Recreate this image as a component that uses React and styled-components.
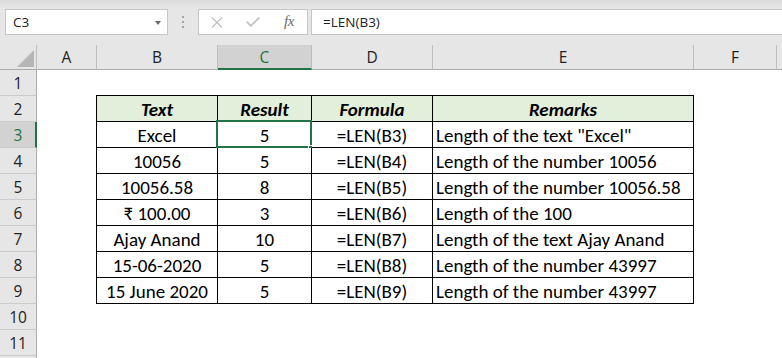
import React from 'react';
import styled, { createGlobalStyle } from 'styled-components';

const GREEN = '#217346';
const UI_FONT = '"Open Sans", "Noto Sans", "DejaVu Sans", sans-serif';
const CELL_FONT = 'Carlito, Lato, "Noto Sans", "DejaVu Sans", sans-serif';

const Global = createGlobalStyle`
  html, body { margin: 0; padding: 0; background: #fff; overflow: hidden; }
  body { width: 782px; height: 358px; }
`;

const Page = styled.div`
  width: 782px;
  height: 358px;
  overflow: hidden;
  display: flex;
  flex-direction: column;
`;

/* ---------- Formula bar ---------- */
const FormulaBar = styled.div`
  height: 35px;
  box-sizing: border-box;
  padding: 9px 0 0 5px;
  display: flex;
  align-items: flex-start;
  background: linear-gradient(#dcdcdc 0px, #e6e6e6 8px, #e6e6e6 100%);
`;

const Box = styled.div`
  box-sizing: border-box;
  height: 26px;
  background: #fff;
  border: 1px solid #c6c6c6;
  display: flex;
  align-items: center;
  font-family: ${UI_FONT};
  font-size: 13.5px;
  color: #222;
`;

const NameBox = styled(Box)`
  width: 163px;
  padding: 0 6px 0 7px;
  justify-content: space-between;
`;

const DropArrow = styled.span`
  width: 0;
  height: 0;
  border-left: 3.5px solid transparent;
  border-right: 3.5px solid transparent;
  border-top: 4px solid #6b6b6b;
  margin-top: 1px;
`;

const Grip = styled.div`
  width: 30px;
  height: 26px;
  display: flex;
  flex-direction: column;
  align-items: center;
  justify-content: center;
  gap: 3px;
`;

const GripDot = styled.span`
  width: 2px;
  height: 2px;
  background: #a3a3a3;
`;

const FxBox = styled(Box)`
  width: 110px;
  margin-right: 3px;
`;

const IconSlot = styled.div`
  width: 36px;
  height: 24px;
  display: flex;
  align-items: center;
  justify-content: center;
`;

const FxText = styled.span`
  font-family: "Liberation Serif", "DejaVu Serif", serif;
  font-style: italic;
  font-size: 15px;
  color: #6a6a6a;
  letter-spacing: -0.5px;
  margin-top: -1px;
`;

const FormulaInput = styled(Box)`
  flex: 1;
  margin-right: -2px;
  padding-left: 11px;
`;

/* ---------- Column header ---------- */
const ColHeaderRow = styled.div`
  height: 35px;
  display: flex;
  align-items: flex-end;
  background: #e6e6e6;
  flex-shrink: 0;
`;

const Corner = styled.div`
  box-sizing: border-box;
  width: 37px;
  height: 25px;
  flex-shrink: 0;
  border-right: 1px solid #bdbdbd;
  border-bottom: 1px solid #ababab;
  display: flex;
  align-items: flex-end;
  justify-content: flex-end;
  padding: 0 2px 2px 0;
`;

const CornerTriangle = styled.div`
  width: 17px;
  height: 17px;
  background: #b5b5b5;
  clip-path: polygon(100% 0, 100% 100%, 0 100%);
`;

const ColHeader = styled.div`
  box-sizing: border-box;
  width: ${p => p.$w}px;
  height: 25px;
  flex-shrink: 0;
  display: flex;
  align-items: center;
  justify-content: center;
  border-right: 1px solid #bdbdbd;
  border-bottom: ${p => (p.$sel ? `2px solid ${GREEN}` : '1px solid #ababab')};
  background: ${p => (p.$sel ? '#d2d2d2' : '#e6e6e6')};
  color: ${p => (p.$sel ? GREEN : '#222')};
  font-family: ${UI_FONT};
  font-size: 15.5px;
  padding-top: ${p => (p.$sel ? '1px' : '0')};
`;

/* ---------- Sheet ---------- */
const Sheet = styled.div`
  display: flex;
  flex: 1;
  min-height: 0;
`;

const RowHeaders = styled.div`
  width: 37px;
  flex-shrink: 0;
  display: flex;
  flex-direction: column;
`;

const RowHeader = styled.div`
  box-sizing: border-box;
  height: 26px;
  flex-shrink: 0;
  display: flex;
  align-items: center;
  justify-content: center;
  background: ${p => (p.$sel ? '#d2d2d2' : '#e6e6e6')};
  border-bottom: 1px solid #cbcbcb;
  border-right: ${p => (p.$sel ? `2px solid ${GREEN}` : '1px solid #ababab')};
  color: ${p => (p.$sel ? GREEN : '#222')};
  font-family: ${UI_FONT};
  font-size: 15.5px;
  padding-left: ${p => (p.$sel ? '1px' : '0')};
`;

const Body = styled.div`
  flex: 1;
  display: grid;
  grid-template-columns: 60px 121px 94px 121px 261px 83px 1fr;
  grid-template-rows: repeat(12, 26px);
  background: #fff;
`;

const DataTable = styled.div`
  grid-column: 2 / 6;
  grid-row: 2 / 10;
  margin: -1px 0 0 -1px;
  display: grid;
  grid-template-columns: 121px 94px 121px 1fr;
  grid-auto-rows: 26px;
  border-left: 1px solid #000;
  border-top: 1px solid #000;
`;

const Cell = styled.div`
  position: relative;
  box-sizing: border-box;
  border-right: 1px solid #000;
  border-bottom: 1px solid #000;
  display: flex;
  align-items: center;
  justify-content: ${p => (p.$left ? 'flex-start' : 'center')};
  padding: ${p => (p.$left ? '0 0 0 3px' : '0')};
  background: ${p => (p.$head ? '#e2efda' : '#fff')};
  font-family: ${CELL_FONT};
  font-size: 19px;
  font-weight: ${p => (p.$head ? 700 : 400)};
  font-style: ${p => (p.$head ? 'italic' : 'normal')};
  color: #000;
  white-space: nowrap;
  line-height: 25px;
  padding-top: 1px;
`;

const Selection = styled.div`
  position: absolute;
  left: -2px;
  top: -2px;
  right: -1px;
  bottom: -1px;
  border: 2px solid ${GREEN};
  pointer-events: none;
`;

const Handle = styled.div`
  position: absolute;
  right: -3px;
  bottom: -4px;
  width: 5px;
  height: 5px;
  background: ${GREEN};
  border-left: 1px solid #fff;
  border-top: 1px solid #fff;
`;

const COLS = [
  { key: 'A', w: 60 },
  { key: 'B', w: 121 },
  { key: 'C', w: 94 },
  { key: 'D', w: 121 },
  { key: 'E', w: 261 },
  { key: 'F', w: 83 },
  { key: '', w: 120 },
];

const HEAD = ['Text', 'Result', 'Formula', 'Remarks'];

const ROWS = [
  ['Excel', '5', '=LEN(B3)', 'Length of the text "Excel"'],
  ['10056', '5', '=LEN(B4)', 'Length of the number 10056'],
  ['10056.58', '8', '=LEN(B5)', 'Length of the number 10056.58'],
  ['₹ 100.00', '3', '=LEN(B6)', 'Length of the 100'],
  ['Ajay Anand', '10', '=LEN(B7)', 'Length of the text Ajay Anand'],
  ['15-06-2020', '5', '=LEN(B8)', 'Length of the number 43997'],
  ['15 June 2020', '5', '=LEN(B9)', 'Length of the number 43997'],
];

const CrossIcon = () => (
  <svg width="12" height="11" viewBox="0 0 12 11">
    <path d="M1 0.5 L11 10.5 M11 0.5 L1 10.5" stroke="#c2c2c2" strokeWidth="1.4" fill="none" />
  </svg>
);

const CheckIcon = () => (
  <svg width="14" height="10" viewBox="0 0 14 10">
    <path d="M0.8 4.6 L4.8 8.8 L13.2 0.6" stroke="#c2c2c2" strokeWidth="1.8" fill="none" />
  </svg>
);

export default function App() {
  return (
    <Page>
      <Global />
      <FormulaBar>
        <NameBox>
          <span>C3</span>
          <DropArrow />
        </NameBox>
        <Grip>
          <GripDot />
          <GripDot />
          <GripDot />
        </Grip>
        <FxBox>
          <IconSlot><CrossIcon /></IconSlot>
          <IconSlot><CheckIcon /></IconSlot>
          <IconSlot><FxText>fx</FxText></IconSlot>
        </FxBox>
        <FormulaInput>=LEN(B3)</FormulaInput>
      </FormulaBar>

      <ColHeaderRow>
        <Corner>
          <CornerTriangle />
        </Corner>
        {COLS.map((c, i) => (
          <ColHeader key={i} $w={c.w} $sel={c.key === 'C'}>
            {c.key}
          </ColHeader>
        ))}
      </ColHeaderRow>

      <Sheet>
        <RowHeaders>
          {Array.from({ length: 12 }, (_, i) => (
            <RowHeader key={i} $sel={i + 1 === 3}>
              {i < 11 ? i + 1 : ''}
            </RowHeader>
          ))}
        </RowHeaders>
        <Body>
          <DataTable>
            {HEAD.map(h => (
              <Cell key={h} $head>
                {h}
              </Cell>
            ))}
            {ROWS.map((r, ri) =>
              r.map((v, ci) => (
                <Cell key={`${ri}-${ci}`} $left={ci === 3}>
                  {v}
                  {ri === 0 && ci === 1 && (
                    <>
                      <Selection />
                      <Handle />
                    </>
                  )}
                </Cell>
              ))
            )}
          </DataTable>
        </Body>
      </Sheet>
    </Page>
  );
}
